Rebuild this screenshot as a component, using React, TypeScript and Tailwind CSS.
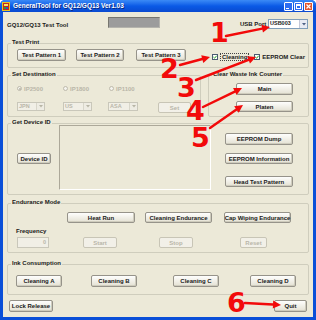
const FONT = "font-['Liberation_Sans',Arial,sans-serif]";

function Btn({ label, className = '', disabled = false }: { label: string; className?: string; disabled?: boolean }) {
  return (
    <div
      className={`flex shrink-0 items-center justify-center whitespace-nowrap rounded-[2px] border text-[6px] font-bold leading-none ${
        disabled
          ? 'border-[#c8c5b6] bg-[#f2f0e8] text-[#b9b6a8]'
          : 'border-[#96938a] bg-linear-to-b from-[#fefefd] to-[#e4e1d3] text-[#1a1a1a] shadow-[inset_-1px_-1px_0_#cfccbd]'
      } ${className}`}
    >
      {label}
    </div>
  );
}

function Group({ label, className = '', children }: { label: string; className?: string; children?: React.ReactNode }) {
  return (
    <div className={`relative shrink-0 rounded-[2px] border border-[#cfcdbd] ${className}`}>
      <span className="absolute left-[3px] top-[-5px] whitespace-nowrap bg-[#ece9d8] px-[1px] text-[6px] font-bold leading-[7px] text-[#1a1a1a]">
        {label}
      </span>
      {children}
    </div>
  );
}

function Combo({ value, className = '', disabled = false }: { value: string; className?: string; disabled?: boolean }) {
  return (
    <div className={`flex shrink-0 border ${disabled ? 'border-[#c9c7ba] bg-[#f1efe6] text-[#b9b6a8]' : 'border-[#7f9db9] bg-white text-[#1a1a1a]'} ${className}`}>
      <span className="flex flex-1 items-center pl-[1px] text-[5.5px] font-bold leading-none">{value}</span>
      <span className={`flex w-[8px] items-center justify-center border-l ${disabled ? 'border-[#d8d6ca] bg-[#eeece3]' : 'border-[#c3c8d8] bg-[#e8ebf3]'}`}>
        <svg width="4" height="3" viewBox="0 0 4 3">
          <path d="M0 0 L4 0 L2 2.5 Z" fill={disabled ? '#b8b5a6' : '#4d6185'} />
        </svg>
      </span>
    </div>
  );
}

function Radio({ label, checked = false }: { label: string; checked?: boolean }) {
  return (
    <div className="flex w-[46px] shrink-0 items-center">
      <span className="flex h-[5px] w-[5px] items-center justify-center rounded-full border border-[#bdbaab] bg-[#f4f3ee]">
        {checked && <span className="h-[2px] w-[2px] rounded-full bg-[#b5b2a3]" />}
      </span>
      <span className="ml-[2px] text-[6px] font-bold leading-none text-[#b9b6a8]">{label}</span>
    </div>
  );
}

function CheckBox({ className = '' }: { className?: string }) {
  return (
    <span className={`flex h-[6px] w-[6px] shrink-0 items-center justify-center border border-[#4a5a70] bg-white ${className}`}>
      <svg width="4" height="4" viewBox="0 0 4 4">
        <path d="M0.4 2 L1.6 3.2 L3.6 0.8" stroke="#21a121" strokeWidth="1" fill="none" />
      </svg>
    </span>
  );
}

function AppIcon() {
  return (
    <svg width="8" height="9" viewBox="0 0 8 9">
      <rect x="0" y="0" width="8" height="9" fill="#e9c21f" />
      <rect x="1" y="1" width="6" height="7" fill="#c42a1c" />
      <rect x="2" y="2" width="4" height="2" fill="#f6e36a" />
      <rect x="2" y="5" width="2" height="2" fill="#2e9a35" />
      <rect x="4" y="5" width="2" height="2" fill="#2c4fd0" />
    </svg>
  );
}

const ARROWS: [number, number, number, number][] = [
  [226, 36, 270, 27],
  [180, 65, 210, 57],
  [196, 80, 256, 57],
  [203, 107, 242, 88],
  [210, 128, 243, 105],
  [245, 303, 281, 305],
];

const DIGITS = [
  { d: '1', cls: 'left-[210px] top-[19px]' },
  { d: '2', cls: 'left-[160px] top-[55px]' },
  { d: '3', cls: 'left-[177px] top-[74px]' },
  { d: '4', cls: 'left-[186px] top-[97px]' },
  { d: '5', cls: 'left-[191px] top-[124px]' },
  { d: '6', cls: 'left-[227px] top-[289px]' },
];

function Annotations() {
  return (
    <div className="pointer-events-none absolute inset-0">
      <svg className="absolute inset-0" width="316" height="320" viewBox="0 0 316 320">
        {ARROWS.map(([x1, y1, x2, y2], i) => {
          const dx = x2 - x1;
          const dy = y2 - y1;
          const len = Math.hypot(dx, dy);
          const ux = dx / len;
          const uy = dy / len;
          const bx = x2 - ux * 8;
          const by = y2 - uy * 8;
          const pts = `${x2},${y2} ${bx - uy * 4},${by + ux * 4} ${bx + uy * 4},${by - ux * 4}`;
          return (
            <g key={i}>
              <line x1={x1} y1={y1} x2={bx} y2={by} stroke="#f20a0a" strokeWidth="2.5" strokeLinecap="round" />
              <polygon points={pts} fill="#f20a0a" />
            </g>
          );
        })}
      </svg>
      {DIGITS.map((g) => (
        <span
          key={g.d}
          className={`absolute ${g.cls} font-['DejaVu_Sans',sans-serif] text-[27px] font-bold leading-none text-[#f20a0a]`}
        >
          {g.d}
        </span>
      ))}
    </div>
  );
}

export default function App() {
  return (
    <div className={`relative flex h-[320px] w-[316px] flex-col overflow-hidden rounded-t-[5px] bg-[#0a4fd8] text-[#1a1a1a] ${FONT}`}>
      {/* タイトルバー */}
      <div className="flex h-[12px] shrink-0 items-center bg-linear-to-b from-[#3b8af6] via-[#0a5ae6] to-[#0a4ad0] pl-[2px] pr-[3px]">
        <AppIcon />
        <span className="ml-[3px] text-[6.5px] font-bold leading-none text-white [text-shadow:1px_1px_0_#0a2a80]">
          GeneralTool for GQ12/GQ13 Ver1.03
        </span>
        <div className="ml-auto flex gap-[1px]">
          <div className="flex h-[9px] w-[9px] items-end justify-start rounded-[1px] border border-white bg-[#2c6df2] pb-[1px] pl-[1px]">
            <span className="h-[1px] w-[3px] bg-white" />
          </div>
          <div className="flex h-[9px] w-[9px] items-center justify-center rounded-[1px] border border-white bg-[#2c6df2]">
            <span className="h-[5px] w-[5px] border border-t-2 border-white" />
          </div>
          <div className="flex h-[9px] w-[9px] items-center justify-center rounded-[1px] border border-white bg-[#e2552d]">
            <svg width="5" height="5" viewBox="0 0 5 5">
              <path d="M0.5 0.5 L4.5 4.5 M4.5 0.5 L0.5 4.5" stroke="white" strokeWidth="1.2" />
            </svg>
          </div>
        </div>
      </div>

      {/* 本体 */}
      <div className="mx-[3px] mb-[3px] flex flex-1 flex-col bg-[#ece9d8]">
        <div className="mt-[5px] flex h-[12px] items-start">
          <span className="ml-[4px] mt-[4.5px] w-[101px] shrink-0 text-[6px] font-bold leading-[7px]">GQ12/GQ13 Test Tool</span>
          <div className="h-[11px] w-[52px] shrink-0 border border-[#77766f] border-b-[#b5b4ad] border-r-[#b5b4ad] bg-[#9c9c9c]" />
          <span className="ml-[80px] mt-[4px] w-[28px] shrink-0 whitespace-nowrap text-[6px] font-bold leading-[7px]">USB Port</span>
          <Combo value="USB003" className="mt-[2px] h-[10px] w-[40px]" />
        </div>

        <Group label="Test Print" className="ml-[4px] mt-[14px] h-[25px] w-[302px]">
          <div className="ml-[9px] mt-[5px] flex items-start">
            <Btn label="Test Pattern 1" className="h-[12px] w-[49px]" />
            <Btn label="Test Pattern 2" className="ml-[10px] h-[12px] w-[48px]" />
            <Btn label="Test Pattern 3" className="ml-[12px] h-[12px] w-[50px]" />
            <CheckBox className="ml-[26px] mt-[5px]" />
            <span className="ml-[2px] mt-[4px] border border-dotted border-[#444] px-[1px] text-[6px] font-bold leading-[6px]">Cleaning</span>
            <CheckBox className="ml-[5px] mt-[5px]" />
            <span className="ml-[2px] mt-[5px] whitespace-nowrap text-[6px] font-bold leading-[6px]">EEPROM Clear</span>
          </div>
        </Group>

        <div className="ml-[4px] mt-[7px] flex h-[42px]">
          <Group label="Set Destination" className="h-full w-[194px]">
            <div className="ml-[9px] mt-[9px] flex h-[7px] items-center">
              <Radio label="IP2500" checked />
              <Radio label="IP1800" />
              <Radio label="IP1100" />
            </div>
            <div className="ml-[9px] mt-[10px] flex items-start">
              <Combo value="JPN" disabled className="h-[9px] w-[28px]" />
              <Combo value="US" disabled className="ml-[18px] h-[9px] w-[29px]" />
              <Combo value="ASA" disabled className="ml-[16px] h-[9px] w-[30px]" />
              <Btn label="Set" disabled className="ml-[20px] h-[11px] w-[33px]" />
            </div>
          </Group>
          <Group label="Clear Waste Ink Counter" className="ml-[7px] h-full w-[101px]">
            <Btn label="Main" className="ml-[27px] mt-[7px] h-[12px] w-[57px]" />
            <Btn label="Platen" className="ml-[27px] mt-[6px] h-[11px] w-[57px]" />
          </Group>
        </div>

        <Group label="Get Device ID" className="ml-[4px] mt-[6px] h-[72px] w-[302px]">
          <div className="flex items-start">
            <Btn label="Device ID" className="ml-[9px] mt-[29px] h-[11px] w-[34px]" />
            <div className="ml-[8px] mt-[1px] h-[65px] w-[152px] shrink-0 border border-[#aca899] border-b-white border-r-white" />
            <div className="ml-[14px] flex flex-col">
              <Btn label="EEPROM Dump" className="mt-[9px] h-[12px] w-[68px]" />
              <Btn label="EEPROM Information" className="mt-[8px] h-[11px] w-[68px]" />
              <Btn label="Head Test Pattern" className="mt-[12px] h-[11px] w-[68px]" />
            </div>
          </div>
        </Group>

        <Group label="Endurance Mode" className="ml-[4px] mt-[8px] h-[50px] w-[302px]">
          <div className="ml-[59px] mt-[8px] flex">
            <Btn label="Heat Run" className="h-[11px] w-[68px]" />
            <Btn label="Cleaning Endurance" className="ml-[10px] h-[11px] w-[67px]" />
            <Btn label="Cap Wiping Endurance" className="ml-[12px] h-[11px] w-[67px]" />
          </div>
          <div className="mt-[5px] flex items-end">
            <div className="ml-[8px] flex flex-col">
              <span className="text-[6px] font-bold leading-[7px]">Frequency</span>
              <div className="ml-[1px] mt-[2px] flex h-[11px] w-[32px] items-center justify-end border border-[#c9c7ba] bg-[#f1efe6] pr-[2px] text-[5.5px] font-bold leading-none text-[#b9b6a8]">
                0
              </div>
            </div>
            <Btn label="Start" disabled className="ml-[34px] h-[11px] w-[34px]" />
            <Btn label="Stop" disabled className="ml-[42px] h-[11px] w-[34px]" />
            <Btn label="Reset" disabled className="ml-[47px] h-[11px] w-[27px]" />
          </div>
        </Group>

        <Group label="Ink Consumption" className="ml-[4px] mt-[11px] h-[31px] w-[302px]">
          <div className="ml-[8px] mt-[10px] flex">
            <Btn label="Cleaning A" className="h-[12px] w-[46px]" />
            <Btn label="Cleaning B" className="ml-[29px] h-[12px] w-[46px]" />
            <Btn label="Cleaning C" className="ml-[36px] h-[12px] w-[46px]" />
            <Btn label="Cleaning D" className="ml-[31px] h-[12px] w-[46px]" />
          </div>
        </Group>

        <div className="mt-[5px] flex h-[12px]">
          <Btn label="Lock Release" className="ml-[6px] h-[12px] w-[44px]" />
          <Btn label="Quit" className="ml-auto mr-[6px] h-[12px] w-[33px]" />
        </div>
      </div>

      <Annotations />
    </div>
  );
}
